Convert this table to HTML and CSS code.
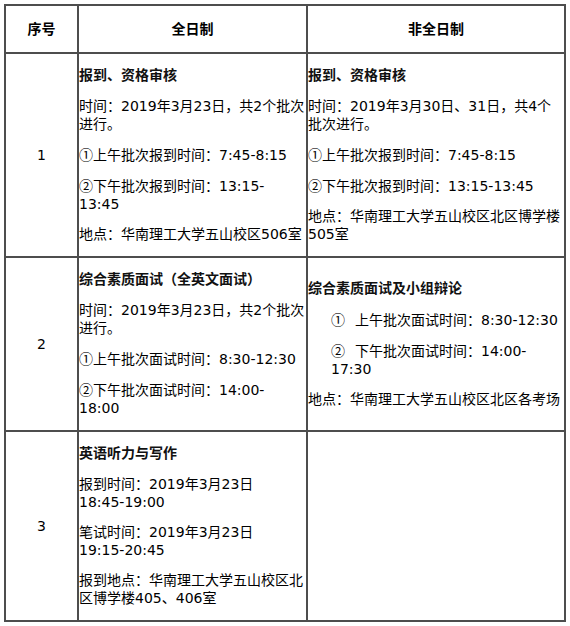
FILE: index.html
```html
<!DOCTYPE html>
<html lang="zh-CN">
<head>
<meta charset="utf-8">
<title>复试安排</title>
<link rel="stylesheet" href="styles.css">
</head>
<body>
<div class="sheet">
  <div class="cell head">序号</div>
  <div class="cell head">全日制</div>
  <div class="cell head">非全日制</div>

  <div class="cell idx">1</div>
  <div class="cell body">
    <p class="title">报到、资格审核</p>
    <p>时间：2019年3月23日，共2个批次进行。</p>
    <p><span class="circ">①</span>上午批次报到时间：7:45-8:15</p>
    <p><span class="circ">②</span>下午批次报到时间：13:15-<br>13:45</p>
    <p>地点：华南理工大学五山校区506室</p>
  </div>
  <div class="cell body">
    <p class="title">报到、资格审核</p>
    <p>时间：2019年3月30日、31日，共4个批次进行。</p>
    <p><span class="circ">①</span>上午批次报到时间：7:45-8:15</p>
    <p><span class="circ">②</span>下午批次报到时间：13:15-13:45</p>
    <p>地点：华南理工大学五山校区北区博学楼505室</p>
  </div>

  <div class="cell idx">2</div>
  <div class="cell body">
    <p class="title">综合素质面试（全英文面试）</p>
    <p>时间：2019年3月23日，共2个批次进行。</p>
    <p><span class="circ">①</span>上午批次面试时间：8:30-12:30</p>
    <p><span class="circ">②</span>下午批次面试时间：14:00-<br>18:00</p>
  </div>
  <div class="cell body">
    <p class="title">综合素质面试及小组辩论</p>
    <p class="indent"><span class="circ gap">①</span>上午批次面试时间：8:30-12:30</p>
    <p class="indent"><span class="circ gap">②</span>下午批次面试时间：14:00-<br>17:30</p>
    <p>地点：华南理工大学五山校区北区各考场</p>
  </div>

  <div class="cell idx">3</div>
  <div class="cell body">
    <p class="title">英语听力与写作</p>
    <p>报到时间：2019年3月23日<br>18:45-19:00</p>
    <p>笔试时间：2019年3月23日<br>19:15-20:45</p>
    <p>报到地点：华南理工大学五山校区北区博学楼405、406室</p>
  </div>
  <div class="cell body"></div>
</div>
</body>
</html>
```
FILE: styles.css
```css
html, body {
  margin: 0;
  padding: 0;
  background: #ffffff;
}

body {
  font-family: "DejaVu Sans", "Noto Sans CJK SC", sans-serif;
  font-size: 14px;
  line-height: 18px;
  color: #000000;
}

.sheet {
  display: grid;
  grid-template-columns: 73px 229px 258px;
  width: max-content;
  margin: 4px;
  border-left: 2px solid #4d4d4d;
  border-top: 2px solid #4d4d4d;
}

.cell {
  box-sizing: border-box;
  border-right: 2px solid #4d4d4d;
  border-bottom: 2px solid #4d4d4d;
  display: flex;
  flex-direction: column;
  justify-content: center;
}

.head {
  height: 48px;
  align-items: center;
  font-weight: bold;
}

.idx {
  align-items: center;
}

.body {
  padding: 12px 0 13px;
}

.body p {
  margin: 0 0 12px;
}

.body p:last-child {
  margin-bottom: 0;
}

.body p.title {
  margin-bottom: 13px;
  font-weight: bold;
  color: #111111;
}

.circ {
  font-family: "Noto Sans CJK SC", sans-serif;
}

.indent {
  padding-left: 23px;
}

.gap {
  margin-right: 10px;
}
```
